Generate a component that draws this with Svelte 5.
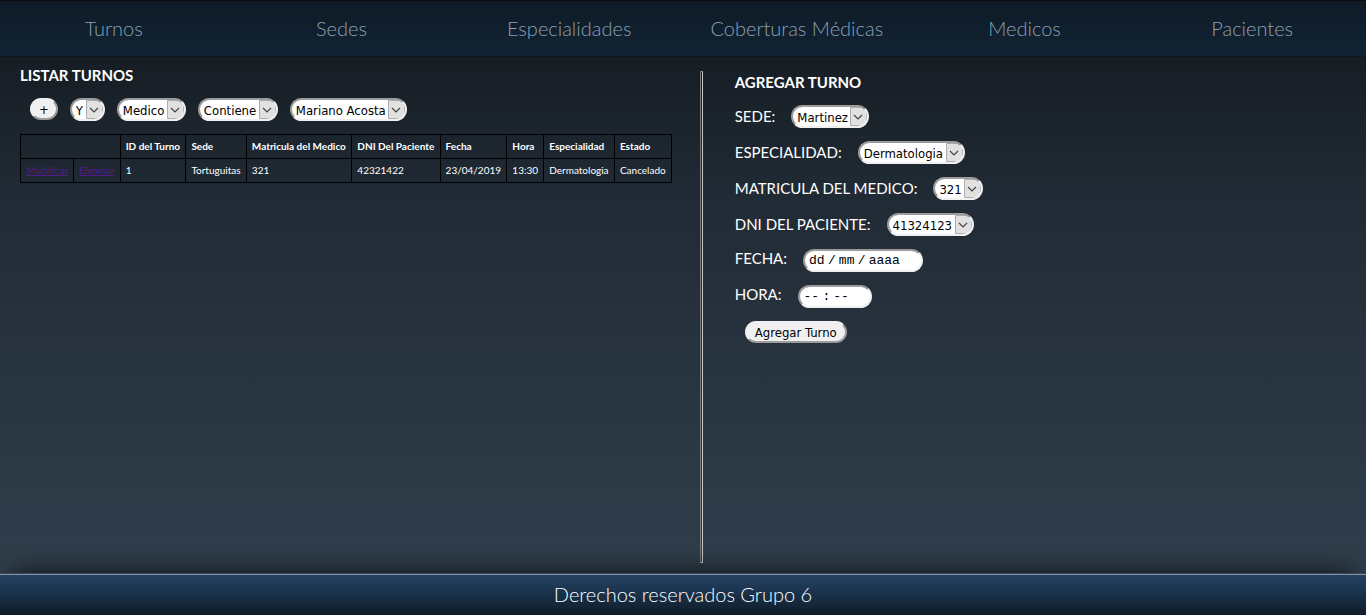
<script>
  const sections = ['Turnos', 'Sedes', 'Especialidades', 'Coberturas Médicas', 'Medicos', 'Pacientes'];
  const filters = [
    { label: 'Operador', value: 'Y' },
    { label: 'Campo', value: 'Medico' },
    { label: 'Condición', value: 'Contiene' },
    { label: 'Valor', value: 'Mariano Acosta' }
  ];
  const columns = ['ID del Turno', 'Sede', 'Matricula del Medico', 'DNI Del Paciente', 'Fecha', 'Hora', 'Especialidad', 'Estado'];
  const rows = [['1', 'Tortuguitas', '321', '42321422', '23/04/2019', '13:30', 'Dermatologia', 'Cancelado']];
  const fields = [
    { id: 'sede', label: 'SEDE:', value: 'Martinez' },
    { id: 'especialidad', label: 'ESPECIALIDAD:', value: 'Dermatologia' },
    { id: 'matricula', label: 'MATRICULA DEL MEDICO:', value: '321' },
    { id: 'dni', label: 'DNI DEL PACIENTE:', value: '41324123' }
  ];
</script>

<div class="page">
  <nav>
    {#each sections as section}
      <a href="#{section}">{section}</a>
    {/each}
  </nav>

  <main>
    <section class="list">
      <h2>LISTAR TURNOS</h2>
      <div class="filters">
        <button type="button">+</button>
        {#each filters as filter}
          <select aria-label={filter.label}><option>{filter.value}</option></select>
        {/each}
      </div>
      <table>
        <thead>
          <tr>
            <th colspan="2"></th>
            {#each columns as column}<th>{column}</th>{/each}
          </tr>
        </thead>
        <tbody>
          {#each rows as row}
            <tr>
              <td><a href="#modificar">Modificar</a></td>
              <td><a href="#eliminar">Eliminar</a></td>
              {#each row as cell}<td>{cell}</td>{/each}
            </tr>
          {/each}
        </tbody>
      </table>
    </section>

    <div class="divider"></div>

    <form>
      <h2>AGREGAR TURNO</h2>
      {#each fields as field}
        <div class="field">
          <label for={field.id}>{field.label}</label>
          <select id={field.id}><option>{field.value}</option></select>
        </div>
      {/each}
      <div class="field moment">
        <label for="dia">FECHA:</label>
        <div class="segments date">
          <input id="dia" placeholder="dd" maxlength="2" />
          <span>/</span>
          <input aria-label="Mes" placeholder="mm" maxlength="2" />
          <span>/</span>
          <input class="year" aria-label="Año" placeholder="aaaa" maxlength="4" />
        </div>
      </div>
      <div class="field moment">
        <label for="hora">HORA:</label>
        <div class="segments time">
          <input id="hora" placeholder="--" maxlength="2" />
          <span>:</span>
          <input aria-label="Minutos" placeholder="--" maxlength="2" />
        </div>
      </div>
      <button type="button">Agregar Turno</button>
    </form>
  </main>

  <footer>Derechos reservados Grupo 6</footer>
</div>

<style>
  :global(body) {
    margin: 0;
  }

  .page {
    min-height: 100vh;
    display: flex;
    flex-direction: column;
    box-sizing: border-box;
    background: linear-gradient(#12171c, #202a34 30%, #32414f);
    color: #fff;
    font-family: Lato, sans-serif;
    font-size: 15px;
  }

  nav {
    display: grid;
    grid-template-columns: repeat(6, 1fr);
    border-top: 1px solid #0a0c0e;
    border-bottom: 1px solid #0e1820;
    background: linear-gradient(#0f1b27, #112333);
  }

  nav a {
    padding: 15px 0 16px;
    color: #8ba0b5;
    font-size: 20px;
    font-weight: 300;
    line-height: 24px;
    text-align: center;
    text-decoration: none;
  }

  main {
    flex: 1;
    display: grid;
    grid-template-columns: minmax(0, 106fr) 3px minmax(0, 100fr);
    padding: 0 22px 0 20px;
  }

  h2 {
    margin: 0;
    font-size: 15px;
    font-weight: 700;
    line-height: 18px;
  }

  .list {
    padding-top: 9px;
  }

  .filters {
    display: flex;
    gap: 12px;
    padding: 14px 10px 13px;
  }

  button,
  select {
    font-family: "DejaVu Sans Condensed", "DejaVu Sans", sans-serif;
    font-size: 13px;
    color: #000;
    box-sizing: border-box;
    border-radius: 12px;
  }

  button {
    height: 22px;
    padding: 1px 8px 0;
    border: 2px outset #f0f0f0;
    background: #f0f0f0;
    line-height: 18px;
  }

  .filters button {
    padding: 1px 7px 0;
  }

  select {
    appearance: none;
    height: 23px;
    padding: 1px 19px 0 4px;
    border: 2px inset #f0f0f0;
    background: #fff url("data:image/svg+xml,%3Csvg xmlns='http://www.w3.org/2000/svg' width='17' height='19'%3E%3Cpath d='M.5.5h16v18H.5z' fill='%23e1e1e1' stroke='%23adadad'/%3E%3Cpath d='M4 8l4 4 4-4' fill='none' stroke='%23444' stroke-width='1.2'/%3E%3C/svg%3E") right center no-repeat;
  }

  table {
    min-width: 652px;
    border-collapse: collapse;
    font-size: 10px;
    line-height: 13px;
  }

  th,
  td {
    padding: 5px;
    border: 1px solid #000;
    text-align: left;
    white-space: nowrap;
  }

  td a {
    color: #551a8b;
  }

  .divider {
    box-sizing: border-box;
    margin: 14px 0 10px;
    border: 1px solid;
    border-color: #77797b #c9c9c9 #c9c9c9 #77797b;
  }

  form {
    padding: 16px 0 0 32px;
  }

  form h2 {
    margin-bottom: 14px;
  }

  .field {
    display: flex;
    gap: 16px;
    margin-bottom: 13px;
  }

  label {
    line-height: 23px;
  }

  .moment label {
    line-height: 19px;
  }

  .segments {
    display: flex;
    gap: 3px;
    box-sizing: border-box;
    height: 23px;
    padding: 0 4px;
    border: 2px inset #f0f0f0;
    border-radius: 12px;
    background: #fff;
    color: #000;
    font-family: "Liberation Mono", monospace;
    font-size: 13px;
    line-height: 20px;
  }

  .date {
    width: 120px;
  }

  .time {
    width: 74px;
  }

  .segments input {
    width: 16px;
    padding: 0;
    border: 0;
    outline: 0;
    background: transparent;
    color: #000;
    font: inherit;
  }

  .segments .year {
    width: 32px;
  }

  .segments input::placeholder {
    color: #000;
    opacity: 1;
  }

  form button {
    margin-left: 10px;
  }

  footer {
    border-top: 2px groove #7f93a6;
    background: linear-gradient(#244261, #19304a 50%, #101c27);
    box-shadow: 0 -10px 28px -12px #000;
    padding-bottom: 2px;
    font-size: 20px;
    font-weight: 300;
    line-height: 38px;
    text-align: center;
  }
</style>
